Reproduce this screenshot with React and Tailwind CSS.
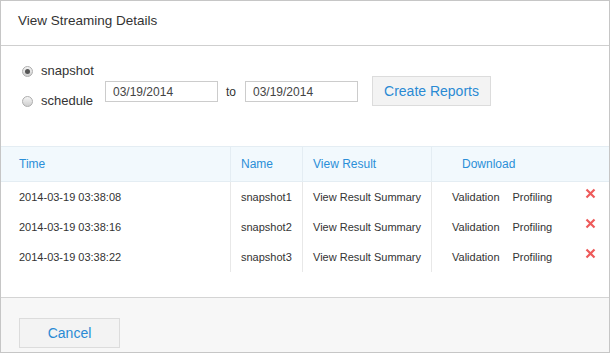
import React from "react";

const rows = [
  { time: "2014-03-19 03:38:08", name: "snapshot1" },
  { time: "2014-03-19 03:38:16", name: "snapshot2" },
  { time: "2014-03-19 03:38:22", name: "snapshot3" },
];

function Radio({ checked, label }) {
  return (
    <div className="flex items-center h-[18px]">
      <div className="w-[11px] h-[11px] rounded-full border border-[#adadad] bg-gradient-to-b from-[#f5f5f5] to-[#cfcfcf] flex items-center justify-center">
        {checked && <div className="w-[5px] h-[5px] rounded-full bg-[#555]" />}
      </div>
      <span className="ml-[8px] text-[13px] text-[#333]">{label}</span>
    </div>
  );
}

function XIcon() {
  return (
    <svg width="11" height="11" viewBox="0 0 11 11">
      <path d="M1.5 1.5 L9.5 9.5 M9.5 1.5 L1.5 9.5" stroke="#ee5a5a" strokeWidth="2.2" strokeLinecap="butt" />
    </svg>
  );
}

export default function App() {
  return (
    <div
      className="w-[610px] h-[353px] border border-[#c6c6c6] bg-white flex flex-col"
      style={{ fontFamily: '"Liberation Sans", Arial, sans-serif' }}
    >
      <div className="h-[45px] border-b border-[#cfcfcf] pl-[17px] pt-[7px] shrink-0">
        <span className="text-[13.5px] text-[#333]">View Streaming Details</span>
      </div>

      <div className="h-[100px] flex items-start pl-[21px] pt-[16px] shrink-0">
        <div className="flex flex-col gap-[12px] w-[83px]">
          <Radio checked label="snapshot" />
          <Radio label="schedule" />
        </div>
        <div className="flex items-center mt-[19px]">
          <div className="w-[113px] h-[21px] border border-[#cccccc] bg-white pl-[7px] flex items-center text-[12px] text-[#444]">
            03/19/2014
          </div>
          <span className="ml-[8px] mr-[7px] text-[12px] text-[#333] w-[12px]">to</span>
          <div className="w-[113px] h-[21px] border border-[#cccccc] bg-white pl-[7px] flex items-center text-[12px] text-[#444]">
            03/19/2014
          </div>
        </div>
        <button className="ml-[14px] mt-[14px] w-[119px] h-[30px] border border-[#dcdcdc] bg-[#f3f3f3] text-[14px] text-[#2a8ad4] flex items-center justify-center">
          Create Reports
        </button>
      </div>

      <div className="grid grid-cols-[229px_72px_129px_1fr] shrink-0">
        <div className="h-[36px] bg-[#f2f9fd] border-t border-b border-[#e4edf3] pl-[18px] flex items-center text-[12px] text-[#2b8fd8]">Time</div>
        <div className="h-[36px] bg-[#f2f9fd] border-t border-b border-l border-[#e4edf3] pl-[10px] flex items-center text-[12px] text-[#2b8fd8]">Name</div>
        <div className="h-[36px] bg-[#f2f9fd] border-t border-b border-l border-[#e4edf3] pl-[10px] flex items-center text-[12px] text-[#2b8fd8]">View Result</div>
        <div className="h-[36px] bg-[#f2f9fd] border-t border-b border-l border-[#e4edf3] pl-[30px] flex items-center text-[12px] text-[#2b8fd8]">Download</div>
        {rows.map((r) => (
          <React.Fragment key={r.name}>
            <div className="h-[30px] pt-[1px] pl-[18px] flex items-center text-[11px] text-[#333]">{r.time}</div>
            <div className="h-[30px] pt-[1px] border-l border-[#e8e8e8] pl-[10px] flex items-center text-[11px] text-[#333]">{r.name}</div>
            <div className="h-[30px] pt-[1px] border-l border-[#e8e8e8] pl-[10px] flex items-center text-[11px] text-[#333]">View Result Summary</div>
            <div className="h-[30px] pt-[1px] border-l border-[#e8e8e8] pl-[20px] flex items-center text-[11px] text-[#333]">
              <span>Validation</span>
              <span className="ml-[13px]">Profiling</span>
              <span className="ml-auto mr-[13px] -mt-[8px] flex"><XIcon /></span>
            </div>
          </React.Fragment>
        ))}
      </div>

      <div className="flex-1" />

      <div className="h-[55px] border-t border-[#d4d4d4] bg-[#f7f7f7] pl-[18px] pt-[20px] shrink-0">
        <button className="w-[101px] h-[30px] border border-[#dcdcdc] bg-[#f3f3f3] text-[14px] text-[#2a8ad4] flex items-center justify-center">
          Cancel
        </button>
      </div>
    </div>
  );
}
